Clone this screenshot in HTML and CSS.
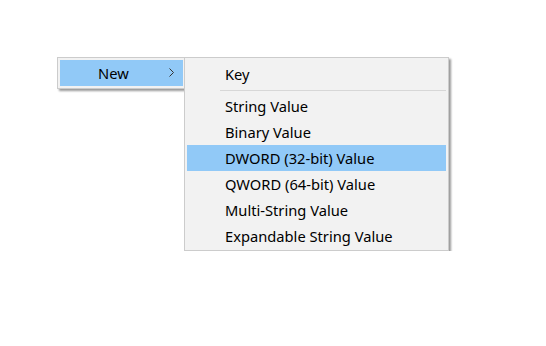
FILE: index.html
```html
<!DOCTYPE html>
<html>
<head>
<meta charset="utf-8">
<link rel="stylesheet" href="styles.css">
</head>
<body>
<div class="stage">
  <div class="menu menu-main">
    <div class="item active">
      <span class="label">New</span>
      <svg class="chev" width="6" height="9" viewBox="0 0 6 9"><polyline points="0.5,0.5 4.5,4.5 0.5,8.5" fill="none" stroke="#333" stroke-width="1"/></svg>
    </div>
  </div>
  <div class="menu menu-sub">
    <div class="item"><span class="label">Key</span></div>
    <div class="sep"></div>
    <div class="item"><span class="label">String Value</span></div>
    <div class="item"><span class="label">Binary Value</span></div>
    <div class="item active"><span class="label">DWORD (32-bit) Value</span></div>
    <div class="item"><span class="label">QWORD (64-bit) Value</span></div>
    <div class="item"><span class="label">Multi-String Value</span></div>
    <div class="item"><span class="label">Expandable String Value</span></div>
  </div>
</div>
</body>
</html>
```

FILE: styles.css
```css
html, body {
  margin: 0;
  padding: 0;
  background: #ffffff;
}
body {
  font-family: "Noto Sans", "Open Sans", sans-serif;
  font-size: 14.7px;
  color: #000;
}
.stage {
  display: flex;
  align-items: flex-start;
  padding: 57px 0 0 57px;
}
.menu {
  background: #f2f2f2;
  border: 1px solid #cccccc;
  box-shadow: 2px 2px 2px rgba(0, 0, 0, 0.4);
  padding: 3px 2px 1px 2px;
  box-sizing: border-box;
}
.menu-main {
  width: 129px;
  padding: 2px;
}
.menu-sub {
  width: 265px;
  margin-left: -2px;
  position: relative;
  z-index: 1;
}
.item {
  height: 26px;
  display: flex;
  align-items: center;
  padding-left: 38px;
  padding-bottom: 1px;
  box-sizing: border-box;
  white-space: nowrap;
}
.item.active {
  background: #91c9f7;
}
.menu-main .item {
  padding-left: 38px;
  padding-right: 8px;
  justify-content: space-between;
}
.chev {
  display: block;
}
.sep {
  height: 6px;
  display: flex;
  align-items: center;
  padding-left: 33px;
}
.sep::before {
  content: "";
  display: block;
  flex: 1;
  height: 1px;
  background: #d7d7d7;
}
```
